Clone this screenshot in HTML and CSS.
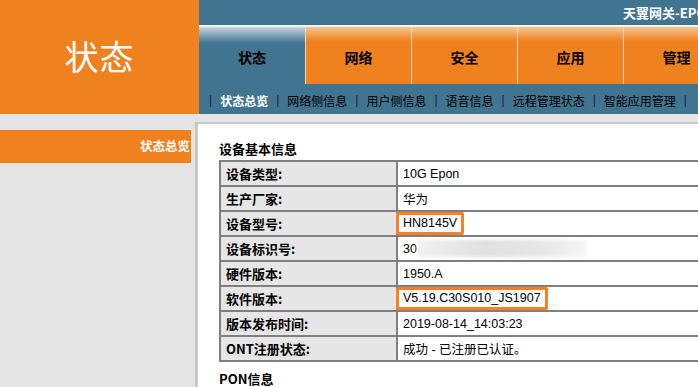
FILE: index.html
```html
<!DOCTYPE html>
<html lang="zh-CN">

<head>
  <meta charset="UTF-8">
  <title>天翼网关-EPON</title>
  <link rel="stylesheet" href="styles.css">
</head>

<body>
  <div class="header">
    <div class="logo">状态</div>
    <div class="nav">
      <div class="title-bar">天翼网关-EPON</div>
      <div class="tabs">
        <div class="tab active">状态</div>
        <div class="tab">网络</div>
        <div class="tab">安全</div>
        <div class="tab">应用</div>
        <div class="tab">管理</div>
      </div>
      <div class="subnav">
        <span class="sep">|</span><span class="sub current">状态总览</span>
        <span class="sep">|</span><span class="sub">网络侧信息</span>
        <span class="sep">|</span><span class="sub">用户侧信息</span>
        <span class="sep">|</span><span class="sub">语音信息</span>
        <span class="sep">|</span><span class="sub">远程管理状态</span>
        <span class="sep">|</span><span class="sub">智能应用管理</span>
        <span class="sep">|</span>
      </div>
    </div>
  </div>

  <div class="main">
    <div class="sidebar">
      <div class="side-item">状态总览</div>
    </div>
    <div class="content">
      <div class="section-title">设备基本信息</div>
      <table class="info">
        <tr><td class="label">设备类型:</td><td class="value">10G Epon</td></tr>
        <tr><td class="label">生产厂家:</td><td class="value">华为</td></tr>
        <tr><td class="label">设备型号:</td><td class="value"><span class="mark">HN8145V</span></td></tr>
        <tr><td class="label">设备标识号:</td><td class="value">30<span class="blur"></span></td></tr>
        <tr><td class="label">硬件版本:</td><td class="value">1950.A</td></tr>
        <tr><td class="label">软件版本:</td><td class="value"><span class="mark">V5.19.C30S010_JS1907</span></td></tr>
        <tr><td class="label">版本发布时间:</td><td class="value">2019-08-14_14:03:23</td></tr>
        <tr><td class="label">ONT注册状态:</td><td class="value">成功 - 已注册已认证。</td></tr>
      </table>
      <div class="section-title next">PON信息</div>
    </div>
  </div>
</body>

</html>
```

FILE: styles.css
```css
body {
  margin: 0;
  padding: 0;
  width: 698px;
  height: 387px;
  overflow: hidden;
  background-color: #e4e4e4;
  font-family: "Liberation Sans", "Noto Sans CJK SC", sans-serif;
  font-size: 12px;
  color: #000;
}

.header {
  display: flex;
  height: 114px;
}

.logo {
  width: 199px;
  flex-shrink: 0;
  background-color: #ef821e;
  color: #fff;
  font-family: "Noto Sans CJK SC", sans-serif;
  font-size: 34px;
  font-weight: 400;
  display: flex;
  align-items: center;
  justify-content: center;
  padding-bottom: 4px;
  box-sizing: border-box;
  letter-spacing: 1px;
}

.nav {
  flex: 1;
  min-width: 0;
  background-color: #41748f;
  display: flex;
  flex-direction: column;
}

.title-bar {
  height: 25px;
  box-sizing: border-box;
  padding-left: 424px;
  padding-top: 5px;
  color: #fff;
  font-family: "Noto Sans CJK SC", sans-serif;
  font-weight: bold;
  font-size: 13px;
  line-height: 16px;
  white-space: nowrap;
  overflow: hidden;
}

.tabs {
  height: 59px;
  display: flex;
  border-top: 2px solid #f4f6f8;
  box-sizing: border-box;
}

.tab {
  width: 106px;
  flex-shrink: 0;
  display: flex;
  align-items: center;
  justify-content: center;
  font-family: "Noto Sans CJK SC", sans-serif;
  font-weight: bold;
  font-size: 14px;
  background: linear-gradient(#f9c692, #ef821e 14px);
  border-left: 1px solid #f6d9bc;
  box-sizing: border-box;
  padding-top: 2px;
}

.tab.active {
  background: linear-gradient(#c7d5df, #41748f 16px);
  border-left: none;
}

.subnav {
  height: 30px;
  display: flex;
  align-items: center;
  padding-left: 10px;
  padding-top: 2px;
  box-sizing: border-box;
  font-family: "Noto Sans CJK SC", sans-serif;
  font-size: 12px;
  white-space: nowrap;
}

.sep {
  color: #1c1d4a;
  font-family: "Liberation Sans", sans-serif;
  font-size: 12px;
  margin-right: 8px;
}

.sub {
  margin-right: 8px;
}

.sub.current {
  color: #fff;
  font-weight: bold;
}

.main {
  display: flex;
  padding-top: 8px;
}

.sidebar {
  width: 195px;
  flex-shrink: 0;
  padding-top: 8px;
}

.side-item {
  width: 191px;
  height: 33px;
  background-color: #ef821e;
  color: #fff;
  font-family: "Noto Sans CJK SC", sans-serif;
  font-weight: bold;
  font-size: 12.5px;
  text-align: right;
  line-height: 32px;
  box-sizing: border-box;
  padding-right: 1px;
}

.content {
  flex: 1;
  min-width: 0;
  background-color: #fff;
  border-left: 3px solid #c8c8c8;
  border-top: 2px solid #c8c8c8;
  padding: 16px 0 0 21px;
  height: 300px;
  overflow: hidden;
}

.section-title {
  font-family: "Noto Sans CJK SC", sans-serif;
  font-weight: bold;
  font-size: 13px;
  line-height: 18px;
  margin-bottom: 2px;
  white-space: nowrap;
}

.section-title.next {
  margin-top: 8px;
}

.info {
  border-collapse: collapse;
  width: 520px;
}

.info td {
  border: 2px solid #7f7f7f;
  height: 23px;
  padding: 0 5px;
  white-space: nowrap;
}

.info .label {
  width: 165px;
  background-color: #e6e6e6;
  font-family: "Noto Sans CJK SC", sans-serif;
  font-weight: bold;
  font-size: 13px;
}

.info .value {
  font-size: 12.5px;
  position: relative;
}

.mark {
  display: inline-block;
  margin-left: -7px;
  padding: 1px 4px 1px 4px;
  border: 3px solid #fd7f23;
  border-radius: 2px;
  line-height: 15px;
}

.blur {
  position: absolute;
  left: 19px;
  top: 3px;
  width: 170px;
  height: 17px;
  background: linear-gradient(90deg, #f2f2f2, #e0e0e0 40%, #e8e8e8 75%, #f7f7f7);
  filter: blur(1.5px);
}
```
